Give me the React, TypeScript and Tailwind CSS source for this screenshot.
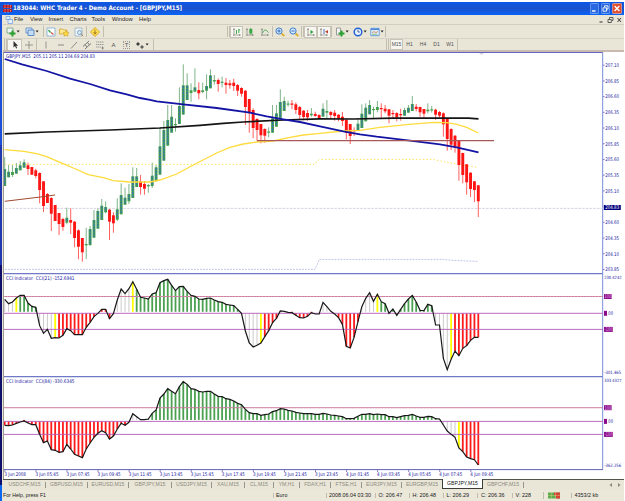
import type { ReactNode } from "react";
import clsx from "clsx";

type Candle = [string, number, number, number, number];

const STEP = 3.882;
const X0 = 4.7;
const xAt = (i: number) => X0 + i * STEP;

// direction, high, body top, body bottom, low
const candles: Candle[] = [
  ["g", 157, 169, 186, 186], ["g", 165, 171.7, 177.3, 177.3], ["g", 165, 172, 175, 177], ["g", 163, 168, 173.7, 173.7],
  ["g", 161, 165.3, 170.3, 170.3], ["g", 159.3, 162.3, 167.7, 167.7], ["r", 162.7, 165.3, 169, 175], ["r", 167, 167, 174.7, 174.7],
  ["r", 168.7, 170.3, 176, 178.3], ["r", 172.3, 173, 190, 203.3], ["r", 181.3, 181.3, 206, 212], ["r", 193, 194, 203, 203],
  ["r", 197.3, 198, 213.7, 231], ["r", 205, 205, 221, 221], ["r", 213, 213, 224, 235], ["r", 217.7, 219, 227, 230.7],
  ["g", 207.7, 217.7, 222.7, 224.3], ["r", 208.3, 220, 222.7, 234], ["r", 221, 221.7, 238, 247.3], ["r", 229.3, 230.3, 246.7, 259.3],
  ["r", 238, 238, 252.3, 261.7], ["g", 227.7, 244, 245.3, 259], ["g", 226, 229, 245, 246], ["g", 210, 220, 237.7, 237.7],
  ["g", 208.3, 211, 228.7, 228.7], ["g", 199, 205.7, 220, 220], ["g", 201.3, 207, 212.3, 213.3], ["r", 209, 209.7, 221.7, 240],
  ["r", 212.3, 215.3, 223.3, 232.7], ["g", 198.3, 209.3, 219.7, 221], ["g", 183.3, 195, 214.3, 214.3], ["g", 187.7, 197.7, 204.7, 204.7],
  ["g", 184, 194, 201.3, 204], ["g", 167.3, 176.3, 198, 198], ["g", 168, 176.3, 187, 187], ["r", 175, 181.3, 187, 194.7],
  ["r", 181, 184, 188.7, 194.7], ["g", 184, 185, 186.3, 192.7], ["g", 162.7, 175.7, 186, 188], ["g", 165, 167.3, 181.3, 181.3],
  ["g", 127, 146.3, 174.7, 174.7], ["g", 121, 130, 160.7, 160.7], ["g", 105, 120, 145.7, 145.7], ["g", 105, 116.7, 132.7, 132.7],
  ["g", 118.3, 124, 125.3, 131.7], ["g", 87.3, 106, 124, 124], ["g", 64.3, 85.3, 114.5, 115], ["g", 73.3, 85.3, 100, 100],
  ["g", 83.3, 90.3, 93, 101.7], ["g", 68.3, 87.3, 91.7, 92.3], ["r", 82.3, 90, 93.3, 99.3], ["g", 82.7, 90.3, 92, 93.3],
  ["g", 74.3, 86, 90.7, 99.3], ["g", 69.3, 75.3, 88.3, 88.3], ["g", 75, 80, 81.5, 84.7], ["r", 78.3, 80, 84, 91.7],
  ["g", 76.7, 81.7, 82.7, 87.3], ["r", 78, 82.7, 85, 93.7], ["r", 80, 83.3, 85.3, 88.7], ["r", 78.7, 82.7, 86, 91],
  ["r", 84, 85, 90.7, 96], ["r", 87.3, 88, 93.7, 96.7], ["r", 90, 90.7, 107, 125], ["r", 99, 99, 113.3, 132.7],
  ["r", 108.3, 110, 128, 138.3], ["r", 118.3, 119, 130, 140.7], ["r", 124, 124, 135.3, 143.3], ["r", 128.3, 129, 135.7, 142.7],
  ["g", 127.3, 131.5, 132.7, 137.3], ["g", 105, 118.3, 132.7, 132.7], ["g", 105, 113.3, 126.7, 126.7], ["g", 89.3, 102, 118.7, 118.7],
  ["g", 96.7, 101, 111, 111], ["g", 100.7, 103.5, 104.7, 106.7], ["r", 100, 103.5, 104.7, 109.3], ["r", 102.3, 104.3, 110, 114],
  ["r", 106, 107, 115, 119.3], ["r", 110, 110.7, 117, 120.3], ["r", 110, 113, 117.3, 120.7], ["g", 108, 113.7, 115.3, 116.7],
  ["r", 111.7, 114, 116, 116.7], ["r", 114.3, 115, 118.3, 118.3], ["g", 103.3, 108.7, 116.7, 116.7], ["g", 100, 111, 112.7, 119.3],
  ["r", 111, 112, 115, 118.3], ["r", 110, 112.7, 116, 120.7], ["r", 114.3, 114.7, 118.7, 121.3], ["r", 112, 116.7, 121, 126],
  ["r", 119.3, 119.7, 132.7, 139.3], ["r", 124, 124, 136, 144], ["r", 127.3, 130, 131, 136], ["g", 119, 123.7, 130.7, 130.7],
  ["g", 104.3, 113.7, 128, 128], ["g", 103.3, 107.7, 121.3, 121.3], ["g", 100, 105, 114.3, 114.3], ["g", 106.7, 109, 110, 118],
  ["g", 101, 107, 110, 112.3], ["r", 103.3, 108, 109, 118.3], ["r", 105, 108.7, 111.3, 113.3], ["r", 109, 109.3, 115.7, 123.3],
  ["r", 110, 113, 114, 118], ["r", 112.3, 113, 117.3, 121.3], ["r", 108.7, 114, 115.3, 120.7], ["g", 107.7, 110, 115.7, 115.7],
  ["g", 105, 107.7, 112.7, 112.7], ["g", 96, 104, 111, 111], ["r", 104, 106.7, 109, 111.3], ["r", 106.7, 107, 112.3, 116.7],
  ["r", 109, 109, 113.7, 117.7], ["g", 103.3, 109.7, 111.3, 113.3], ["g", 106, 109.3, 110.3, 112.7], ["r", 108.7, 109.7, 114.7, 120],
  ["r", 111, 112, 115.7, 117.7], ["r", 112.3, 113.3, 124.3, 136.7], ["r", 118.7, 118.7, 139, 150.7], ["r", 128.3, 129, 144.7, 150],
  ["r", 135, 135.7, 146.7, 152.7], ["r", 140, 140.7, 165, 180.7], ["r", 152.7, 153, 175, 183.3], ["r", 164, 164.3, 182.3, 194.7],
  ["r", 172.3, 172.7, 189, 197], ["r", 181, 181.3, 190, 202], ["r", 185, 185.3, 201.3, 217],
];

// indicator lines, in thirds of a pixel below y=270
const cci21 = [
  88, 101, 96, 84, 76, 76, 99, 109, 112, 167, 190, 178, 205, 203, 204, 196, 176, 182, 194, 194, 194, 172, 157, 140, 130,
  118, 118, 146, 131, 90, 57, 71, 56, 35, 58, 82, 84, 87, 72, 68, 38, 32, 28, 46, 62, 50, 49, 64, 76, 79, 87, 88, 85, 84,
  90, 95, 97, 103, 105, 107, 118, 130, 183, 219, 231, 226, 219, 200, 182, 158, 145, 123, 124, 127, 128, 136, 143, 144,
  139, 128, 132, 132, 97, 110, 124, 132, 143, 163, 229, 234, 202, 155, 110, 85, 68, 94, 73, 95, 101, 130, 117, 136, 118,
  101, 87, 76, 96, 121, 122, 103, 107, 165, 165, 265, 299, 268, 243, 257, 235, 227, 211, 202, 202,
];
const cci84 = [
  466, 467, 465, 460, 456, 453, 459, 464, 464, 493, 518, 513, 539, 541, 547, 545, 523, 537, 553, 558, 563, 537, 519, 502,
  490, 482, 488, 507, 498, 477, 460, 466, 457, 431, 440, 449, 449, 447, 430, 420, 384, 372, 356, 364, 371, 350, 335, 343,
  356, 358, 364, 366, 364, 364, 372, 379, 380, 386, 388, 393, 400, 404, 418, 428, 431, 431, 436, 434, 432, 425, 422, 416,
  417, 421, 423, 427, 429, 431, 431, 431, 433, 433, 430, 432, 435, 436, 438, 440, 446, 446, 445, 439, 433, 433, 431, 434,
  432, 434, 434, 440, 440, 443, 440, 437, 436, 433, 438, 442, 442, 439, 440, 446, 447, 465, 483, 493, 502, 534, 545, 561,
  566, 569, 585,
];

type Range = [number, number, string];
const GREY = "#c4c4c4";
const YELLOW = "#ffff00";
const GREEN = "#4aa050";
const RED = "#ff1a1a";

const cci21Colors: Range[] = [
  [0, 2, GREY], [3, 3, YELLOW], [4, 8, GREEN], [9, 12, GREY], [13, 13, YELLOW], [14, 28, RED], [29, 32, GREY],
  [33, 33, YELLOW], [34, 60, GREEN], [61, 65, GREY], [66, 66, YELLOW], [67, 81, RED], [82, 84, GREY], [85, 91, RED],
  [92, 95, GREY], [96, 96, YELLOW], [97, 110, GREEN], [111, 114, GREY], [115, 115, YELLOW], [116, 122, RED],
];
const cci84Colors: Range[] = [
  [0, 32, RED], [33, 35, GREY], [36, 112, GREEN], [113, 116, GREY], [117, 117, YELLOW], [118, 122, RED],
];

const prices = [
  "207.10", "206.85", "206.60", "206.35", "206.10", "205.85", "205.60", "205.35", "205.10", "", "204.60", "204.35",
  "204.10", "203.85",
];
const hours = ["05", "07", "09", "11", "13", "15", "17", "19", "21", "23", "01", "03", "05", "07", "09"];

interface ChartTextProps {
  x: number;
  y: number;
  w: number;
  size?: number;
  fill?: string;
  children: string;
}

function ChartText({ x, y, w, size = 5, fill = "#2020a0", children }: ChartTextProps) {
  return (
    <text
      className="[font-family:'DejaVu_Sans_Condensed','DejaVu_Sans',sans-serif]"
      x={x} y={y} textLength={w} lengthAdjust="spacingAndGlyphs" fontSize={size} fill={fill} xmlSpace="preserve"
    >
      {children}
    </text>
  );
}

function PriceChart() {
  return (
    <svg className="block shrink-0" width="620" height="221" viewBox="4 52 620 221">
      <path d="M4 52.5H603" stroke="#6464c8" />
      <path d="M602.7 52V273" stroke="#7c8cd8" />
      <path d="M479 53.2h5l-2.5 1.6z" fill="#c8c8c8" />
      <path d="M5 208.4H603" stroke="#cfcfe0" strokeDasharray="2.5 1.2" strokeWidth="0.9" />
      <path d="M5 164.4H314L319.5 159.4H433L447 162.3L477 167.3" fill="none" stroke="#ffe14d" strokeDasharray="1.3 2.2" />
      <path d="M5 269.4H315L319.5 259.4H443L452 260.3L478 261.4" fill="none" stroke="#b4bce4" strokeDasharray="1.8 1.2" strokeWidth="0.9" />
      {candles.map(([dir, high, top, bottom, low], i) => {
        const x = xAt(i);
        return (
          <g key={i}>
            <path d={`M${x} ${high}V${low}`} stroke={dir === "g" ? "#7fb489" : "#ff6060"} strokeWidth="1" />
            <rect x={x - 1.45} y={top} width="2.9" height={Math.max(bottom - top, 1.2)} fill={dir === "g" ? "#43a04f" : "#ff1414"} />
            {dir === "g" && bottom - top > 3 && (
              <path d={`M${x} ${top + 0.7}V${bottom - 0.7}`} stroke="#3868c0" strokeWidth="1.1" strokeDasharray="2 1" />
            )}
          </g>
        );
      })}
      <path
        d="M4.7 149.7L24 151.3L36.7 153.7L46.7 156.7L60 162.3L73.3 168L88.3 174.7L103.3 177.7L113.3 180.7L130 182L150 182L160 180L176.7 174L193.3 165L216.7 153L230 147.3L243.3 144L256.7 142L273.3 141L290 137.3L303.3 135L320 133.3L343.3 131L360 130.3L380 127.3L406.7 124.7L433.3 122.4L446.7 122.7L456.7 124.3L466.7 127.3L478.3 133"
        fill="none"
        stroke="#ffdc3c"
        strokeWidth="1.3"
      />
      <path
        d="M4.7 133.8L46.7 132L110 130L160 128L200 125.3L223.3 123.3L243.3 122L283.3 120L320 118.9L353.3 119L393.3 118.1L468.3 118.1L478.5 118.8"
        fill="none"
        stroke="#141414"
        strokeWidth="1.7"
      />
      <path
        d="M4.7 59L22 64.3L46.7 71L70 78.7L90 84L110 90.3L126.7 94.3L140 98L150 99.8L156.7 101.3L183.3 104.3L216.7 108L250 112.7L266.7 116.3L283.3 119.3L300 122L320 126.3L343.3 131.3L360 134.3L376.7 136.7L410 140.7L440 144.3L456.7 147.3L478.5 152.3"
        fill="none"
        stroke="#1414a4"
        strokeWidth="1.8"
      />
      <path d="M4.7 201.3L38 197.3L55 195" fill="none" stroke="#a04a30" />
      <path d="M257 140.6H494" stroke="#a85858" strokeWidth="1.3" />
      <ChartText x={6} y={58.4} w={89}>GBPJPY,M15  205.11 205.11 204.69 204.83</ChartText>
      {prices.map((p, i) => {
        const y = 65.2 + i * 15.71;
        return (
          <g key={i}>
            {p && <path d={`M603 ${y}h1.6`} stroke="#5c5cc0" strokeWidth="0.8" />}
            {p && <ChartText x={605.2} y={y + 1.8} w={13.8}>{p}</ChartText>}
          </g>
        );
      })}
      <rect x="603.8" y="205" width="17" height="5" fill="#00007c" />
      <ChartText x={605.2} y={209.3} w={14} fill="#ffffff">204.83</ChartText>
    </svg>
  );
}

interface IndicatorProps {
  top: number;
  height: number;
  zero: number;
  plus: number;
  minus: number;
  values: number[];
  colors: Range[];
  title: string;
  max: string;
  min: string;
}

function Indicator({ top, height, zero, plus, minus, values, colors, title, max, min }: IndicatorProps) {
  const points = values.map((v, i) => ({ x: xAt(i), y: 270 + v / 3 }));
  return (
    <svg className="block shrink-0" width="620" height={height} viewBox={`4 ${top} 620 ${height}`}>
      <path d={`M4 ${top + 0.4}H603`} stroke="#7078c8" strokeWidth="1.5" />
      <path d={`M602.7 ${top}v${height}`} stroke="#7c8cd8" />
      {colors.map(([from, to, color]) =>
        points.slice(from, to + 1).map(({ x, y }) => {
          const base = y < zero ? zero - 1.5 : zero;
          if (Math.abs(base - y) < 0.8) return null;
          return <path key={x} d={`M${x} ${base}V${y}`} stroke={color} strokeWidth={color === GREY ? 0.9 : 1.8} />;
        })
      )}
      <path d={`M4 ${plus}H603`} stroke="#c070a8" strokeWidth="0.9" />
      <path d={`M4 ${plus}H603`} stroke="#e89a90" strokeWidth="0.9" strokeDasharray="1 2" />
      <path d={`M4 ${zero}H603M4 ${minus}H603`} stroke="#b45cb8" strokeWidth="0.9" />
      <polyline points={points.map((p) => `${p.x},${p.y}`).join(" ")} fill="none" stroke="#181818" strokeWidth="1.2" />
      <ChartText x={6} y={top + 7.2} w={68.5}>{title}</ChartText>
      <ChartText x={604.2} y={top + 6.2} w={17.4} size={4.3}>{max}</ChartText>
      <rect x="604" y={plus - 2.5} width="7.6" height="5" fill="#8a0c8a" />
      <ChartText x={604.6} y={plus + 1.8} w={6.6} fill="#e8b8e8">100</ChartText>
      <rect x="604" y={zero - 2.5} width="3" height="5" fill="#8a0c8a" />
      <ChartText x={607.2} y={zero + 1.8} w={5.8}>.00</ChartText>
      <rect x="604" y={minus - 2.5} width="8.8" height="5" fill="#8a0c8a" />
      <ChartText x={604.6} y={minus + 1.8} w={7.8} fill="#e8b8e8">-100</ChartText>
      <ChartText x={604.2} y={top + height - 1.9} w={17} size={4.5}>{min}</ChartText>
    </svg>
  );
}

const Sep = () => <div className="h-[11px] w-px shrink-0 bg-[#c2beb0]" />;
const Handle = () => <div className="h-[11px] w-[3px] shrink-0 border-x border-[#c2beb0]" />;

function Cell({ w, pressed, caret, children }: { w: string; pressed?: boolean; caret?: boolean; children: ReactNode }) {
  return (
    <div className={clsx("flex h-[12px] shrink-0 items-center justify-center", w, pressed && "border border-[#c8c4b8] bg-[#f7f6f0]")}>
      <svg className="shrink-0" width="10" height="10" viewBox="0 0 10 10" fill="none">
        {children}
      </svg>
      {caret && (
        <svg className="shrink-0" width="4" height="3" viewBox="0 0 4 3">
          <path d="M0.6 0.6h3L2.1 2.4z" fill="#222" />
        </svg>
      )}
    </div>
  );
}

const Axes = () => <path d="M2 1V9M1 8H9M1 2.5h2M7.5 7v2" stroke="#909088" strokeWidth="0.8" />;

function TitleBar() {
  return (
    <div className="flex h-[13px] shrink-0 items-center bg-linear-to-b from-[#0a58e8] via-[#1a52cc] to-[#0464f8] pr-[2px] pl-[3px]">
      <svg width="9" height="9" viewBox="0 0 9 9" className="shrink-0">
        <path d="M0 1h9v3H0zM0 5h9v3H0z" fill="#b41c2c" />
        <path d="M2 0v9M5 0v9M7.5 1v7" stroke="#f4b4a4" strokeWidth="0.7" strokeDasharray="1.5 1" />
      </svg>
      <h1 className="ml-[1px] text-[6.15px] leading-none font-bold whitespace-nowrap text-white [font-family:'DejaVu_Sans_Condensed','DejaVu_Sans',sans-serif]">
        183044: WHC Trader 4 - Demo Account - [GBPJPY,M15]
      </h1>
      <div className="ml-auto flex gap-[2px]">
        <svg width="9" height="11" viewBox="0 0 9 11">
          <rect x="0.3" y="0.5" width="8.4" height="10" rx="1" fill="#2868e0" stroke="#a8c4f8" strokeWidth="0.6" />
          <path d="M2 8h3.5" stroke="#fff" strokeWidth="1.4" />
        </svg>
        <svg width="9" height="11" viewBox="0 0 9 11">
          <rect x="0.3" y="0.5" width="8.4" height="10" rx="1" fill="#2868e0" stroke="#a8c4f8" strokeWidth="0.6" />
          <path d="M3.5 4V2.8h3.5v3.4H6M2 4.8h3.5v3.4H2z" stroke="#fff" strokeWidth="0.9" fill="none" />
        </svg>
        <svg width="10" height="11" viewBox="0 0 10 11">
          <rect x="0.3" y="0.5" width="9.4" height="10" rx="1" fill="#e05030" stroke="#f8c8b8" strokeWidth="0.6" />
          <path d="M2.6 3L7.4 8M7.4 3L2.6 8" stroke="#fff" strokeWidth="1.3" />
        </svg>
      </div>
    </div>
  );
}

function MenuBar() {
  return (
    <div className="flex h-[10px] shrink-0 items-center border-b border-[#d2cfc2] pl-[2px] text-[5.8px] leading-none text-[#1c1c1c]">
      <svg width="8" height="8" viewBox="0 0 8 8" className="mr-[1px] shrink-0">
        <path d="M1 0.5h4v3H1zM3 3.5h4.5v4H3z" fill="#e4f0fc" stroke="#6c9ce0" strokeWidth="0.7" />
      </svg>
      <span className="w-[16px]">File</span>
      <span className="w-[18.5px]">View</span>
      <span className="w-[21px]">Insert</span>
      <span className="w-[22px]">Charts</span>
      <span className="w-[20.5px]">Tools</span>
      <span className="w-[27px]">Window</span>
      <span>Help</span>
      <svg width="24" height="8" viewBox="0 0 24 8" className="mr-[1px] ml-auto" fill="none" stroke="#3c3c3c">
        <path d="M0.5 6h3" strokeWidth="1.1" />
        <path d="M10.5 3V1.5H14V4.5h-1M9 3.5h3.3V6.5H9z" strokeWidth="0.8" />
        <path d="M18.5 2L22 6M22 2L18.5 6" strokeWidth="1" />
      </svg>
    </div>
  );
}

function ChartToolbar() {
  return (
    <div className="flex h-[13px] shrink-0 items-center">
      <Cell w="w-[19px]" caret>
        <path d="M1 1h6v5H1z" fill="#eef4f8" stroke="#70a080" strokeWidth="0.8" />
        <path d="M6.5 3.5v6M3.5 6.5h6" stroke="#28a030" strokeWidth="2" />
      </Cell>
      <Cell w="w-[20px]" caret>
        <path d="M1 1h6v5H1z" fill="#dce8f8" stroke="#5c90d0" strokeWidth="0.9" />
        <path d="M3 3h6v5.5H3z" fill="#c4dcf4" stroke="#5084c8" strokeWidth="0.9" />
      </Cell>
      <div className="w-[1px]" />
      <Sep />
      <Cell w="w-[13px]">
        <path d="M1 1h8v8H1z" fill="#fff" stroke="#78a8d0" strokeWidth="0.8" />
        <path d="M2.5 3l2 2.5" stroke="#38a048" strokeWidth="1.3" />
        <path d="M5 5.5l2.5 2" stroke="#d05040" strokeWidth="1.2" />
      </Cell>
      <Cell w="w-[14px]">
        <path d="M0.5 2h3l1 1H8v4H0.5z" fill="#fce890" stroke="#d0a430" strokeWidth="0.8" />
        <path d="M7 3.5l1 2 2 .2-1.4 1.5.4 2L7 8.2 5 9.2l.4-2L4 5.7l2-.2z" fill="#ffe040" stroke="#c89020" strokeWidth="0.5" />
      </Cell>
      <Cell w="w-[15px]">
        <path d="M1 1h7v8H1z" fill="#eef4fa" stroke="#98b0c8" strokeWidth="0.8" />
        <circle cx="5.5" cy="5.5" r="2" fill="#d8ecf8" stroke="#6890b0" strokeWidth="0.8" />
        <path d="M7 7l2.3 2.3" stroke="#a08048" />
      </Cell>
      <Sep />
      <Cell w="w-[16px]">
        <path d="M5 0.5L9.5 5 5 9.5 0.5 5z" fill="#ffe458" stroke="#d8a018" strokeWidth="0.9" />
        <path d="M5 2.5v5M3.5 5L5 6.8 6.5 5" stroke="#a06c10" strokeWidth="0.9" />
      </Cell>
      <Sep />
      <div className="w-[123px] shrink-0" />
      <Handle />
      <Cell w="w-[13px]" pressed>
        <Axes />
        <path d="M4.5 3v4M6.8 2v4M6.8 2.8h1.4" stroke="#30a040" strokeWidth="0.9" />
      </Cell>
      <Cell w="w-[14px]">
        <Axes />
        <path d="M5.8 1v6.5" stroke="#208030" strokeWidth="0.8" />
        <path d="M4.3 2h3v4.5h-3z" fill="#38a848" />
      </Cell>
      <Cell w="w-[15px]">
        <Axes />
        <path d="M2.5 6C4 2 6 2.5 8.5 5.5" stroke="#38a048" strokeWidth="0.9" />
      </Cell>
      <Sep />
      <Cell w="w-[13px]">
        <path d="M6.5 6.5L9.3 9" stroke="#e0b030" strokeWidth="2" />
        <circle cx="4" cy="4" r="3.1" fill="#d4e8ff" stroke="#4080d0" strokeWidth="1" />
        <path d="M4 2.4v3.2M2.4 4h3.2" stroke="#2860b8" strokeWidth="0.9" />
      </Cell>
      <Cell w="w-[15px]">
        <path d="M6.5 6.5L9.3 9" stroke="#e0b030" strokeWidth="2" />
        <circle cx="4" cy="4" r="3.1" fill="#d4e8ff" stroke="#4080d0" strokeWidth="1" />
        <path d="M2.4 4h3.2" stroke="#2860b8" strokeWidth="0.9" />
      </Cell>
      <Handle />
      <Cell w="w-[13px]" pressed>
        <Axes />
        <path d="M4.5 3l3 2-3 2z" fill="#28a038" />
      </Cell>
      <Cell w="w-[14px]" pressed>
        <Axes />
        <path d="M5 2v5" stroke="#3868c0" strokeWidth="0.9" />
        <path d="M9 3L6 4.7 9 6.5z" fill="#c04030" />
      </Cell>
      <Sep />
      <div className="w-[1px]" />
      <Cell w="w-[18px]" caret>
        <path d="M1.5 1h4v7h-4z" fill="#f4f4f0" stroke="#888" strokeWidth="0.8" />
        <path d="M6.5 3.5v6M3.5 6.5h6" stroke="#28a030" strokeWidth="2" />
      </Cell>
      <Cell w="w-[17px]" caret>
        <circle cx="5" cy="5" r="3.8" fill="#e8f2ff" stroke="#2464d0" strokeWidth="1.5" />
        <path d="M5 2.8V5h1.8" stroke="#204080" strokeWidth="0.8" />
      </Cell>
      <Cell w="w-[17px]" caret>
        <path d="M0.8 1.3h8.4v7.4H0.8z" fill="#eef6ff" stroke="#5c94d8" strokeWidth="0.9" />
        <path d="M1 2.3h8" stroke="#4c88d8" strokeWidth="1.6" />
        <path d="M2 5.5l2-.8 2 .8 2-1" stroke="#b06030" strokeWidth="0.7" />
        <path d="M2 7.2h5.5" stroke="#40a048" strokeWidth="0.7" />
      </Cell>
      <Sep />
    </div>
  );
}

function LineToolbar() {
  return (
    <div className="flex h-[12px] shrink-0 items-center border-t border-[#d6d3c6] text-[5px] leading-none text-[#505050]">
      <div className="w-[1px]" />
      <Handle />
      <Cell w="w-[15px]" pressed>
        <path d="M3.5 1v6.5l1.6-1.4 1 2.3 1-.5-1-2.1h2z" fill="#303030" />
      </Cell>
      <Cell w="w-[14px]">
        <path d="M5 1v8M1 5h8" stroke="#909088" strokeWidth="0.9" />
      </Cell>
      <Sep />
      <Cell w="w-[17px]">
        <path d="M5 1.5v7" stroke="#909088" strokeWidth="0.9" />
      </Cell>
      <Cell w="w-[13px]">
        <path d="M2 5h6" stroke="#808078" strokeWidth="0.9" />
      </Cell>
      <Cell w="w-[13px]">
        <path d="M2 8.5L8 2" stroke="#808078" strokeWidth="0.9" />
      </Cell>
      <Cell w="w-[13px]">
        <path d="M1 6.5L7 1M3 9l6-5.5M3 4.5l2 2.5M5.5 2.5l2 2.5" stroke="#707070" strokeWidth="0.9" />
      </Cell>
      <Cell w="w-[14px]">
        <path d="M1 2h8M1 4.5h8M1 7h5" stroke="#888" strokeWidth="0.8" strokeDasharray="1.4 0.5" />
        <path d="M7.5 6.5v3M6.5 8h2.5" stroke="#777" strokeWidth="0.8" />
      </Cell>
      <span className="w-[13px] text-center text-[6px]">A</span>
      <span className="w-[13px] text-center">
        <span className="border border-dotted border-[#999] px-[1px] text-[6px]">T</span>
      </span>
      <Cell w="w-[18px]" caret>
        <path d="M1 4l2-2 2 2-2 2z" fill="#404040" />
        <path d="M5 7l2-2 2 2-2 2z" fill="#606060" />
      </Cell>
      <div className="w-[2px]" />
      <Sep />
      <div className="w-[232px] shrink-0" />
      <Handle />
      <div className="ml-[1px] flex h-[11px] w-[13px] items-center justify-center border border-[#c8c4b8] bg-[#f7f6f0]">M15</div>
      <span className="w-[13px] text-center">H1</span>
      <span className="w-[14px] text-center">H4</span>
      <span className="w-[13px] text-center">D1</span>
      <span className="w-[14px] text-center">W1</span>
      <Sep />
    </div>
  );
}

function TimeAxis() {
  return (
    <svg className="block shrink-0" width="620" height="10" viewBox="4 469 620 10">
      <path d="M4 469.6H603" stroke="#6464b4" />
      {["3 Jun 2008", ...hours.map((h, i) => `${i < 10 ? 3 : 4} Jun ${h}:45`)].map((label, i) => (
        <g key={label}>
          <path d={`M${4.9 + i * 31.06} 470v2`} stroke="#6464b4" strokeWidth="0.8" />
          <ChartText x={4.4 + i * 31.06} y={476.1} w={i === 0 ? 21.5 : 23}>{label}</ChartText>
        </g>
      ))}
    </svg>
  );
}

const tabs = [
  { name: "USDCHF,M15", w: "w-[42px]" },
  { name: "GBPUSD,M15", w: "w-[42px]" },
  { name: "EURUSD,M15", w: "w-[41px]" },
  { name: "GBPJPY,M15", w: "w-[43px]" },
  { name: "USDJPY,M15", w: "w-[40px]" },
  { name: "XAU,M15", w: "w-[33px]" },
  { name: "CL,M15", w: "w-[29px]" },
  { name: "YM,H1", w: "w-[26px]" },
  { name: "FDAX,H1", w: "w-[31px]" },
  { name: "FTSE,H1", w: "w-[31px]" },
  { name: "EURJPY,M15", w: "w-[40px]" },
];

function ChartTabs() {
  return (
    <div className="flex h-[11px] shrink-0 items-center border-t border-[#54544c] pl-[1px] text-[5.1px] leading-none whitespace-nowrap text-[#8c897c]">
      {tabs.map(({ name, w }) => (
        <div key={name} className={clsx("flex h-[6px] shrink-0 items-center justify-center border-r border-[#98958a]", w)}>
          {name}
        </div>
      ))}
      <div className="w-[40px] shrink-0 text-center">EURGBP,M15</div>
      <div className="-mt-px flex h-[10px] w-[41px] shrink-0 items-center justify-center self-start border border-t-0 border-[#3c3c38] bg-white text-[#101010]">
        GBPJPY,M15
      </div>
      <div className="flex h-[6px] w-[41px] shrink-0 items-center justify-center border-r border-[#98958a]">GBPCHF,M15</div>
      <svg width="14" height="6" viewBox="0 0 14 6" className="mr-[2px] ml-auto" fill="#8c897c">
        <path d="M4 1v4L1.5 3zM10 1v4l2.5-2z" />
      </svg>
    </div>
  );
}

function StatusBar() {
  return (
    <div className="flex h-[11px] shrink-0 items-center bg-[#ebe8da] text-[5.4px] leading-none whitespace-nowrap text-[#202020]">
      <span className="w-[270px] text-[5.2px]">For Help, press F1</span>
      <span className="w-[53px] border-l border-[#c0bcae] pl-[2px]">Euro</span>
      <span className="w-[48.5px] border-l border-[#c0bcae] pl-[2px]">2008.06.04 03:30</span>
      <span className="w-[34px] border-l border-[#c0bcae] pl-[3px]">O: 206.47</span>
      <span className="w-[34px] border-l border-[#c0bcae] pl-[3px]">H: 206.48</span>
      <span className="w-[34.5px] border-l border-[#c0bcae] pl-[3px]">L: 206.29</span>
      <span className="w-[34.5px] border-l border-[#c0bcae] pl-[3px]">C: 206.36</span>
      <span className="w-[31px] border-l border-[#c0bcae] pl-[3px]">V: 228</span>
      <span className="flex w-[28px] border-l border-[#c0bcae] pl-[4px]">
        <svg width="12" height="7" viewBox="0 0 12 7">
          <path d="M0 0.5h12v6H0z" fill="#5cac50" />
          <path d="M6 0.5h6v3H6zM8 3.5h4v3H8z" fill="#d84038" />
          <path d="M0 3.5h12M3.5 0v7M7.5 0v7" stroke="#d8c878" strokeWidth="0.5" />
        </svg>
      </span>
      <span className="border-l border-[#c0bcae] pl-[3px]">4353/2 kb</span>
    </div>
  );
}

export default function App() {
  return (
    <div className="flex h-[501px] w-[625px] flex-col overflow-hidden bg-white pt-[2px] pr-[1px] [font-family:'Liberation_Sans',Arial,sans-serif]">
      <TitleBar />
      <div className="flex min-h-0 flex-1">
        <div className="flex w-[2px] shrink-0 flex-col">
          <div className="h-[130px] bg-[#1c50d8]" />
          <div className="h-[120px] bg-[#2038b0]" />
          <div className="flex-1 bg-[#10106c]" />
          <div className="h-[16px] bg-[#0c68f0]" />
        </div>
        <div className="flex min-w-0 flex-1 flex-col bg-[#e9e6d8] pl-[1px]">
          <MenuBar />
          <ChartToolbar />
          <LineToolbar />
          <div className="h-[2px] shrink-0 bg-[#c8bab0]" />
          <div className="w-[621px] border-l border-[#9c9a94] bg-white">
            <PriceChart />
            <Indicator
              top={273} height={103} zero={313.3} plus={296.5} minus={329.4}
              values={cci21} colors={cci21Colors}
              title="CCI Indicator  CCI(21) -152.6941" max="230.4242" min="-301.465"
            />
            <Indicator
              top={376} height={93} zero={421.4} plus={407.7} minus={434.4}
              values={cci84} colors={cci84Colors}
              title="CCI Indicator  CCI(84) -330.6345" max="333.4327" min="-362.256"
            />
            <TimeAxis />
          </div>
          <ChartTabs />
          <StatusBar />
        </div>
      </div>
    </div>
  );
}
